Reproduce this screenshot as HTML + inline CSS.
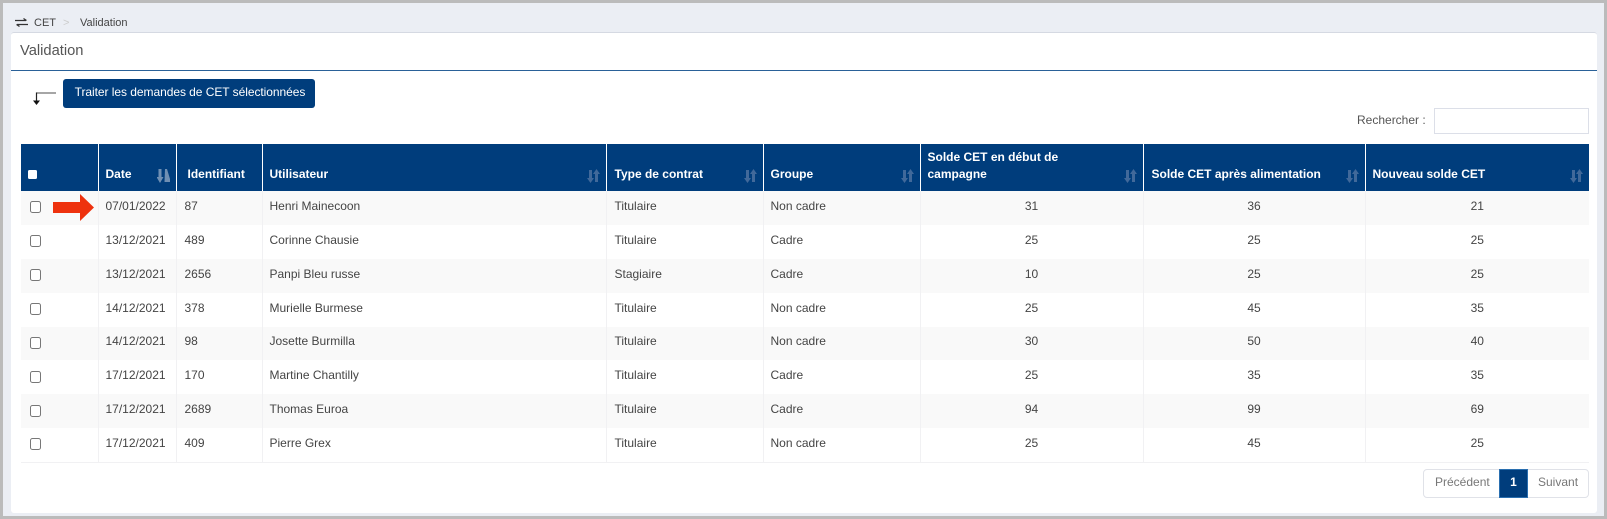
<!DOCTYPE html>
<html lang="fr">
<head>
<meta charset="utf-8">
<title>Validation</title>
<style>
*{box-sizing:border-box}
html,body{margin:0;padding:0;width:1607px;height:519px;overflow:hidden;background:#fff}
body{font-family:"Liberation Sans",sans-serif;font-size:12px;color:#444;position:relative;filter:blur(.3px)}
.abs{position:absolute;white-space:nowrap}
#bg{left:0;top:0;width:1607px;height:519px;background:#ebeef4;border:3px solid #bbb}
#panel{left:11px;top:32px;width:1586px;height:481px;background:#fff;border-radius:3px;border-top:1px solid #d5d9e2}
#rule{left:11px;top:70px;width:1586px;height:1px;background:#2a6198}
#btn{left:63px;top:79px;width:252px;height:29px;padding-left:2px;background:#003d7c;border-radius:3px;color:#fff;font-size:12px;line-height:27px;text-align:center;letter-spacing:-.05px}
#search{left:1434px;top:108px;width:155px;height:26px;background:#fff;border:1px solid #dcdfe8}
table{position:absolute;left:21px;top:144px;width:1568px;border-collapse:collapse;table-layout:fixed}
th{background:#003d7c;color:#fff;font-weight:bold;font-size:12px;text-align:left;vertical-align:bottom;height:47px;padding:0 7px 8px 7px;line-height:17px;border-left:1px solid #fff;position:relative}
th:first-child{border-left:0}
td{height:33.875px;padding:0 7px 4px 7px;border-left:1px solid #f1f1f3;color:#444;font-size:12px;white-space:nowrap}
td:first-child{border-left:0}
tr.o td{background:#f9f9f9}
tbody tr:last-child td{border-bottom:1px solid #f1f1f3}
td.c{text-align:center}
td:nth-child(3),td:nth-child(5){padding-left:8px}
th:nth-child(5),th:nth-child(8){padding-left:8px}
.s{position:absolute;right:6px;bottom:8px;width:13px;height:14px}
.cb{display:block;width:11px;height:12px;border:1px solid #777;border-radius:2.5px;background:#fff;margin-left:2px;margin-top:3px}
.hcb{display:block;width:9px;height:9px;background:#fff;border-radius:1.5px;margin-bottom:4px}
#pag{left:1423px;top:469px;width:166px;height:29px;border:1px solid #e0e2e8;border-radius:4px;background:#fff;color:#777;line-height:25px}
#pag span{position:absolute;top:0}
#one{left:1499px;top:469px;width:29px;height:29px;background:#003d7c;border:1px solid #2a6fb0;color:#fff;font-weight:bold;text-align:center;line-height:25px}
</style>
</head>
<body>
<div class="abs" id="bg"></div>
<div class="abs" id="panel"></div>
<div class="abs" id="rule"></div>

<svg class="abs" style="left:15px;top:18px" width="13" height="9" viewBox="0 0 13 9"><path d="M0 2.500H11M8.500 .5L11.500 2.500M13 6.500H2M4.500 8.500L1.500 6.500" stroke="#333" stroke-width="1.200" fill="none"/></svg>
<div class="abs" style="left:34px;top:16px;font-size:11px;line-height:14px;color:#444">CET</div>
<div class="abs" style="left:63px;top:16px;font-size:11px;line-height:14px;color:#ccc">&gt;</div>
<div class="abs" style="left:80px;top:16px;font-size:11px;line-height:14px;color:#444">Validation</div>
<div class="abs" style="left:20px;top:42px;font-size:14.700px;line-height:18px;color:#555">Validation</div>

<svg class="abs" style="left:32px;top:91px" width="26" height="15" viewBox="0 0 26 15"><path d="M24 2H4.500" stroke="#888" stroke-width="1.500" fill="none"/><path d="M4.500 1.500V10" stroke="#222" stroke-width="1.200" fill="none"/><path d="M1 9.500H8L4.500 14Z" fill="#111"/></svg>
<div class="abs" id="btn">Traiter les demandes de CET sélectionnées</div>

<div class="abs" style="left:1357px;top:113px;line-height:15px;color:#555">Rechercher :</div>
<div class="abs" id="search"></div>

<table>
<colgroup>
<col style="width:77px"><col style="width:78px"><col style="width:86px"><col style="width:344px"><col style="width:157px"><col style="width:157px"><col style="width:223px"><col style="width:222px"><col style="width:224px">
</colgroup>
<thead>
<tr>
<th><span class="hcb"></span></th>
<th>Date<svg class="s" viewBox="0 0 13 14"><path d="M1.500 0h3v8h2l-3.500 6-3.500-6h2zM8 0h2l3 10v3H7.500z" fill="#6f8fb3"/></svg></th>
<th style="padding-left:11px">Identifiant</th>
<th>Utilisateur<svg class="s" viewBox="0 0 13 14"><path d="M2 1h3v8h2l-3.500 5L0 9h2zM8 5H6l3.500-5L13 5h-2v8H8z" fill="#41699a"/></svg></th>
<th>Type de contrat<svg class="s" viewBox="0 0 13 14"><path d="M2 1h3v8h2l-3.500 5L0 9h2zM8 5H6l3.500-5L13 5h-2v8H8z" fill="#41699a"/></svg></th>
<th>Groupe<svg class="s" viewBox="0 0 13 14"><path d="M2 1h3v8h2l-3.500 5L0 9h2zM8 5H6l3.500-5L13 5h-2v8H8z" fill="#41699a"/></svg></th>
<th>Solde CET en début de<br>campagne<svg class="s" viewBox="0 0 13 14"><path d="M2 1h3v8h2l-3.500 5L0 9h2zM8 5H6l3.500-5L13 5h-2v8H8z" fill="#41699a"/></svg></th>
<th>Solde CET après alimentation<svg class="s" viewBox="0 0 13 14"><path d="M2 1h3v8h2l-3.500 5L0 9h2zM8 5H6l3.500-5L13 5h-2v8H8z" fill="#41699a"/></svg></th>
<th>Nouveau solde CET<svg class="s" viewBox="0 0 13 14"><path d="M2 1h3v8h2l-3.500 5L0 9h2zM8 5H6l3.500-5L13 5h-2v8H8z" fill="#41699a"/></svg></th>
</tr>
</thead>
<tbody>
<tr class="o"><td><span class="cb"></span></td><td>07/01/2022</td><td>87</td><td>Henri Mainecoon</td><td>Titulaire</td><td>Non cadre</td><td class="c">31</td><td class="c">36</td><td class="c">21</td></tr>
<tr><td><span class="cb"></span></td><td>13/12/2021</td><td>489</td><td>Corinne Chausie</td><td>Titulaire</td><td>Cadre</td><td class="c">25</td><td class="c">25</td><td class="c">25</td></tr>
<tr class="o"><td><span class="cb"></span></td><td>13/12/2021</td><td>2656</td><td>Panpi Bleu russe</td><td>Stagiaire</td><td>Cadre</td><td class="c">10</td><td class="c">25</td><td class="c">25</td></tr>
<tr><td><span class="cb"></span></td><td>14/12/2021</td><td>378</td><td>Murielle Burmese</td><td>Titulaire</td><td>Non cadre</td><td class="c">25</td><td class="c">45</td><td class="c">35</td></tr>
<tr class="o"><td><span class="cb"></span></td><td>14/12/2021</td><td>98</td><td>Josette Burmilla</td><td>Titulaire</td><td>Non cadre</td><td class="c">30</td><td class="c">50</td><td class="c">40</td></tr>
<tr><td><span class="cb"></span></td><td>17/12/2021</td><td>170</td><td>Martine Chantilly</td><td>Titulaire</td><td>Cadre</td><td class="c">25</td><td class="c">35</td><td class="c">35</td></tr>
<tr class="o"><td><span class="cb"></span></td><td>17/12/2021</td><td>2689</td><td>Thomas Euroa</td><td>Titulaire</td><td>Cadre</td><td class="c">94</td><td class="c">99</td><td class="c">69</td></tr>
<tr><td><span class="cb"></span></td><td>17/12/2021</td><td>409</td><td>Pierre Grex</td><td>Titulaire</td><td>Non cadre</td><td class="c">25</td><td class="c">45</td><td class="c">25</td></tr>
</tbody>
</table>

<svg class="abs" style="left:53px;top:194px" width="42" height="27" viewBox="0 0 42 27"><path d="M0 8H27V0L41 13.500 27 27V19H0Z" fill="#ee320e"/></svg>

<div class="abs" id="pag"><span style="left:11px">Précédent</span><span style="left:114px">Suivant</span></div>
<div class="abs" id="one">1</div>
</body>
</html>
